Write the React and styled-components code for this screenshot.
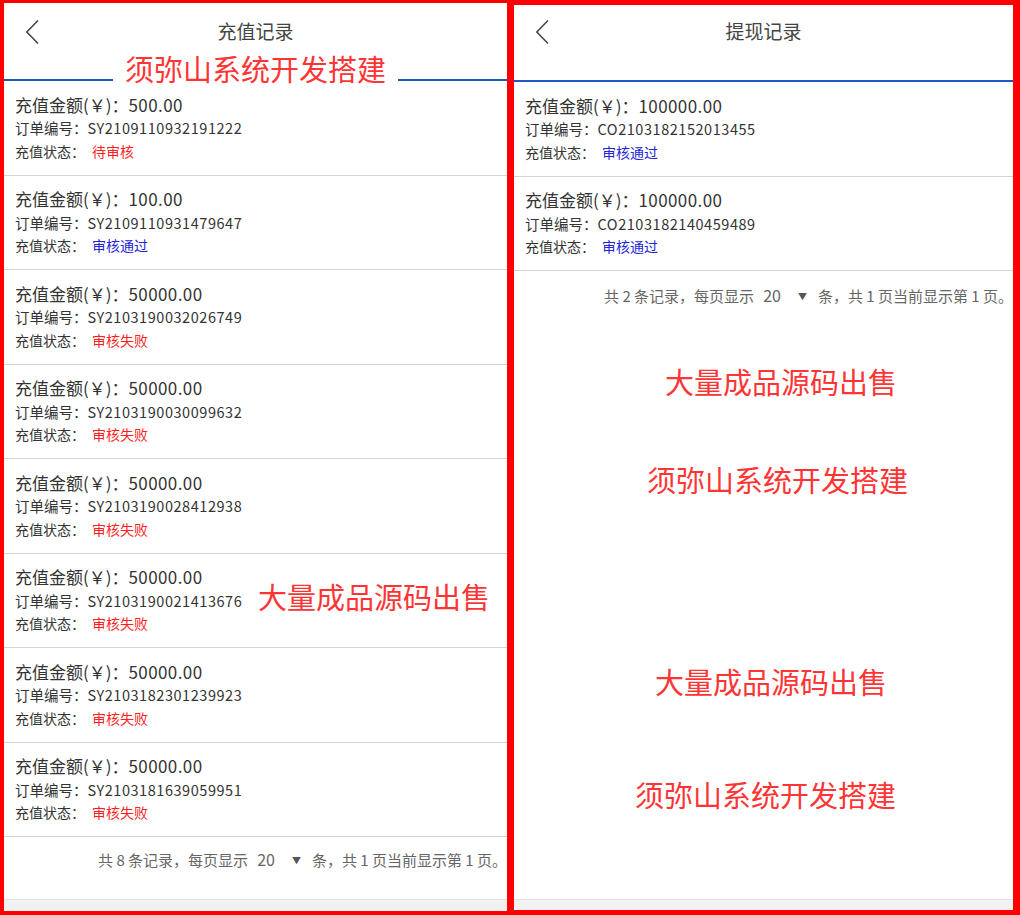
import React from "react";
import styled, { createGlobalStyle } from "styled-components";

const GlobalStyle = createGlobalStyle`
  html, body {
    margin: 0;
    padding: 0;
    background: #ffffff;
  }
  body {
    font-family: "Noto Sans CJK SC", "Noto Sans", sans-serif;
    color: #333333;
  }
`;

const Page = styled.div`
  display: flex;
  width: 1020px;
  height: 915px;
`;

const Panel = styled.section`
  position: relative;
  box-sizing: border-box;
  width: 510px;
  height: 915px;
  display: flex;
  flex-direction: column;
  background: #ffffff;
  border-style: solid;
  border-color: #ff0000;
  border-width: ${(p) => p.$border};
  overflow: hidden;
`;

const Header = styled.header`
  box-sizing: border-box;
  height: ${(p) => p.$height}px;
  padding-top: ${(p) => p.$top}px;
  display: grid;
  grid-template-columns: 1fr auto 1fr;
  align-items: start;
  border-bottom: 2px solid #2056c4;
  flex-shrink: 0;
`;

const BackButton = styled.button`
  justify-self: start;
  margin-left: 21px;
  margin-top: 1px;
  padding: 0;
  border: 0;
  background: none;
  width: 14px;
  height: 24px;
  cursor: pointer;
  display: flex;
`;

const Title = styled.h1`
  margin: 0;
  font-size: 19px;
  line-height: 24px;
  font-weight: 400;
  color: #444444;
`;

const List = styled.ul`
  list-style: none;
  margin: 0;
  padding: 0;
  flex-shrink: 0;
`;

const Item = styled.li`
  padding: 11.5px 11px 11.5px;
  border-bottom: 1px solid #d4d4d4;
`;

const Amount = styled.div`
  font-size: 17px;
  line-height: 23.5px;
  color: #333333;
`;

const Figure = styled.span`
  letter-spacing: ${(p) => p.$track}px;
`;

const OrderNo = styled.div`
  font-size: 14.5px;
  line-height: 23.5px;
  color: #333333;
`;

const StatusRow = styled.div`
  font-size: 14px;
  line-height: 23.5px;
  color: #333333;
`;

const StatusValue = styled.span`
  margin-left: 7px;
  color: ${(p) => (p.$ok ? "#2424d6" : "#ff1f1f")};
`;

const Pager = styled.div`
  padding: ${(p) => p.$top}px 0 0 0;
  text-align: right;
  font-size: 15px;
  line-height: 21px;
  color: #666666;
  white-space: nowrap;
`;

const PageSize = styled.span`
  display: inline-block;
  margin: 0 0 0 9px;
  font-size: 16px;
`;

const Caret = styled.span`
  display: inline-block;
  margin: 0 11px 0 17px;
  font-size: 9px;
  vertical-align: 2px;
  color: #555555;
`;

const Filler = styled.div`
  flex: 1;
`;

const BottomBar = styled.div`
  height: ${(p) => p.$height}px;
  flex-shrink: 0;
  background: #f1f1f1;
  border-top: 1px solid #e3e3e3;
`;

const Stamp = styled.div`
  position: absolute;
  left: ${(p) => p.$x}px;
  top: ${(p) => p.$y}px;
  padding: 0 ${(p) => (p.$pad ? 12 : 0)}px;
  background: ${(p) => (p.$pad ? "#ffffff" : "transparent")};
  font-size: 29px;
  line-height: 34px;
  color: #ff3434;
  white-space: nowrap;
`;

function ChevronLeft() {
  return (
    <svg width="14" height="24" viewBox="0 0 14 24" fill="none">
      <polyline
        points="12.5,1 1.8,12 12.5,23"
        stroke="#4a4a4a"
        strokeWidth="1.7"
        strokeLinecap="round"
        strokeLinejoin="round"
      />
    </svg>
  );
}

function Record({ amount, order, status }) {
  const ok = status === "审核通过";
  return (
    <Item>
      <Amount>
        充值金额(￥)：<Figure $track={0.4}>{amount}</Figure>
      </Amount>
      <OrderNo>
        订单编号：<Figure $track={0.55}>{order}</Figure>
      </OrderNo>
      <StatusRow>
        充值状态：<StatusValue $ok={ok}>{status}</StatusValue>
      </StatusRow>
    </Item>
  );
}

function Pagination({ total, top }) {
  return (
    <Pager $top={top}>
      共 {total} 条记录，每页显示<PageSize>20</PageSize>
      <Caret>▼</Caret>条，共 1 页当前显示第 1 页。
    </Pager>
  );
}

const recharges = [
  { amount: "500.00", order: "SY2109110932191222", status: "待审核" },
  { amount: "100.00", order: "SY2109110931479647", status: "审核通过" },
  { amount: "50000.00", order: "SY2103190032026749", status: "审核失败" },
  { amount: "50000.00", order: "SY2103190030099632", status: "审核失败" },
  { amount: "50000.00", order: "SY2103190028412938", status: "审核失败" },
  { amount: "50000.00", order: "SY2103190021413676", status: "审核失败" },
  { amount: "50000.00", order: "SY2103182301239923", status: "审核失败" },
  { amount: "50000.00", order: "SY2103181639059951", status: "审核失败" },
];

const withdrawals = [
  { amount: "100000.00", order: "CO2103182152013455", status: "审核通过" },
  { amount: "100000.00", order: "CO2103182140459489", status: "审核通过" },
];

export default function App() {
  return (
    <>
      <GlobalStyle />
      <Page>
        <Panel $border="3px 3px 4px 4px">
          <Header $height={78} $top={16}>
            <BackButton aria-label="返回">
              <ChevronLeft />
            </BackButton>
            <Title>充值记录</Title>
          </Header>
          <List>
            {recharges.map((r) => (
              <Record key={r.order} {...r} />
            ))}
          </List>
          <Pagination total={8} top={12} />
          <Filler />
          <BottomBar $height={11} />
          <Stamp $x={109} $y={48} $pad>须弥山系统开发搭建</Stamp>
          <Stamp $x={254} $y={576}>大量成品源码出售</Stamp>
        </Panel>
        <Panel $border="5px 7px 5px 4px">
          <Header $height={77} $top={14}>
            <BackButton aria-label="返回">
              <ChevronLeft />
            </BackButton>
            <Title>提现记录</Title>
          </Header>
          <List>
            {withdrawals.map((r) => (
              <Record key={r.order} {...r} />
            ))}
          </List>
          <Pagination total={2} top={14} />
          <Filler />
          <BottomBar $height={10} />
          <Stamp $x={151} $y={359}>大量成品源码出售</Stamp>
          <Stamp $x={133} $y={457}>须弥山系统开发搭建</Stamp>
          <Stamp $x={141} $y={659}>大量成品源码出售</Stamp>
          <Stamp $x={121} $y={772}>须弥山系统开发搭建</Stamp>
        </Panel>
      </Page>
    </>
  );
}
